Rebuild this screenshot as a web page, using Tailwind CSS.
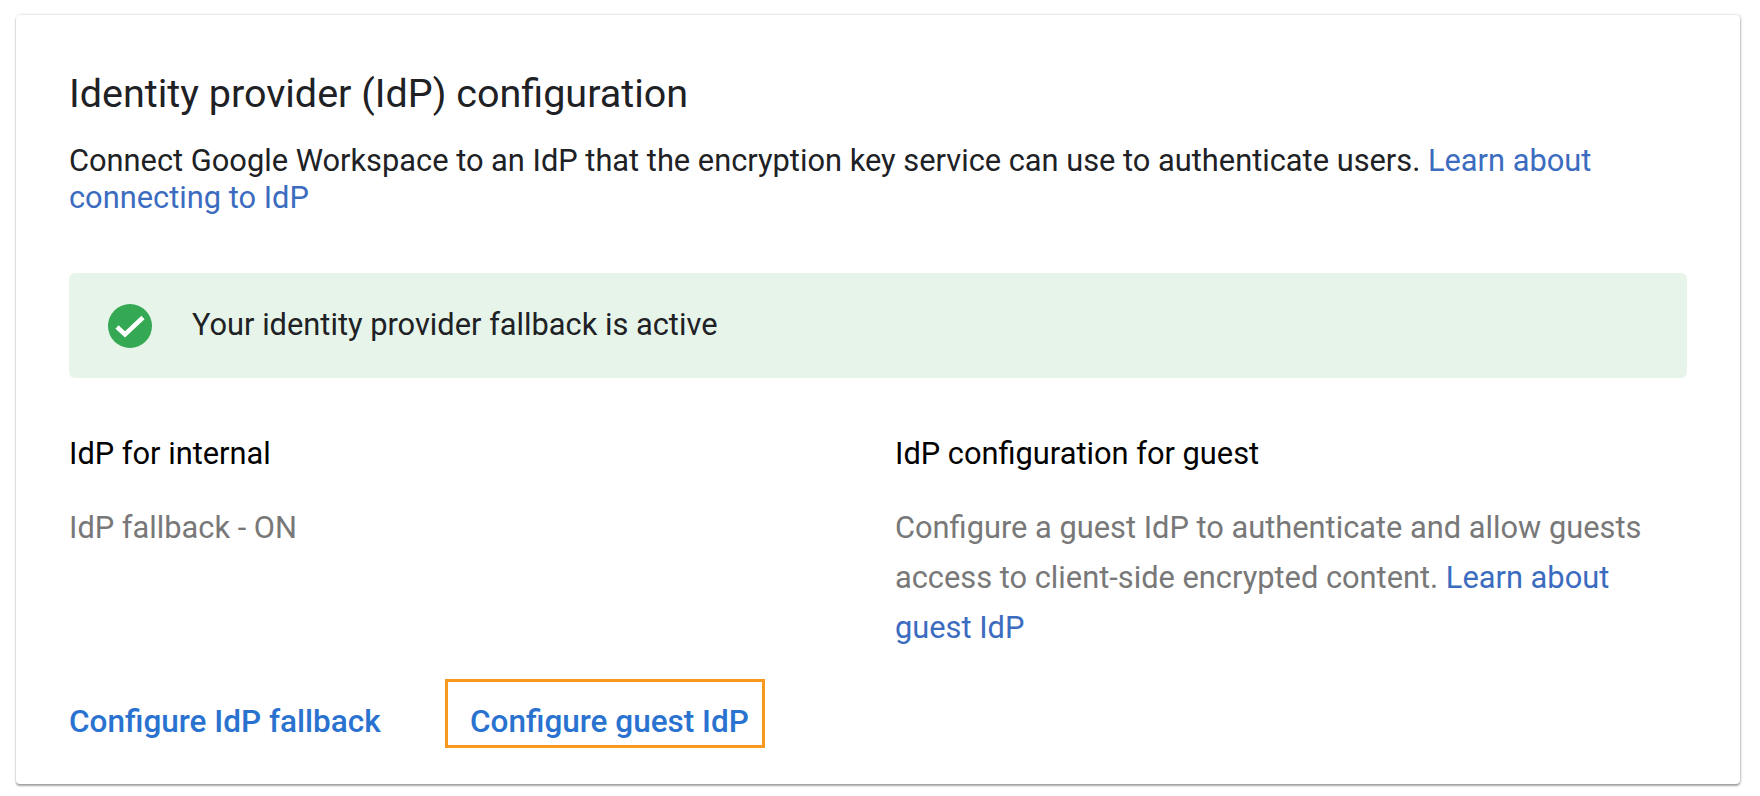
<!DOCTYPE html>
<html lang="en">
<head>
    <meta charset="UTF-8">
    <title>Identity provider (IdP) configuration</title>
    <script src="https://cdn.jsdelivr.net/npm/@tailwindcss/browser@4"></script>
</head>
<body class="bg-white font-['Roboto',sans-serif] min-h-screen pt-[15px]">
    <div class="ml-[16px] w-[1724px] h-[769px] bg-white rounded-[4px] pl-[53px] pr-[53px] pt-[57px] shadow-[0_2px_2px_rgba(0,0,0,0.32),1px_0_3px_rgba(0,0,0,0.14),0_0_3px_rgba(0,0,0,0.08)]">
        <h1 class="text-[39.5px] leading-[44px] text-[#202124]">Identity provider (IdP) configuration</h1>

        <p class="mt-[26px] text-[30.8px] leading-[37px] text-[#202124]">Connect Google Workspace to an IdP that the encryption key service can use to authenticate users. <a href="#" class="text-[#3b6cc0]">Learn about connecting to IdP</a></p>

        <div class="mt-[57px] h-[105px] bg-[#e6f4ea] rounded-[6px] flex items-center pl-[39px]">
            <svg class="w-[44px] h-[44px]" viewBox="0 0 44 44">
                <circle cx="22" cy="22" r="22" fill="#34a853"/>
                <path d="M9 23l8 7.5L35 13.5" fill="none" stroke="#fff" stroke-width="4.5"/>
            </svg>
            <span class="ml-[40px] text-[30.8px] text-[#202124]">Your identity provider fallback is active</span>
        </div>

        <div class="grid grid-cols-[826px_1fr] mt-[56px]">
            <div>
                <h2 class="text-[30.8px] leading-[40px] text-black">IdP for internal</h2>
                <p class="mt-[29px] text-[30.8px] leading-[50px] text-[#787878]">IdP fallback - ON</p>
            </div>
            <div class="pr-[20px]">
                <h2 class="text-[30.8px] leading-[40px] text-black">IdP configuration for guest</h2>
                <p class="mt-[29px] text-[30.8px] leading-[50px] text-[#787878]">Configure a guest IdP to authenticate and allow guests access to client-side encrypted content. <a href="#" class="text-[#3b6cc0]">Learn about guest IdP</a></p>
            </div>
        </div>

        <div class="flex mt-[26px]">
            <a href="#" class="w-[312px] h-[69px] pt-[16px] flex items-center text-[31.5px] font-medium text-[#2a72d0]">Configure IdP fallback</a>
            <a href="#" class="ml-[64px] h-[69px] w-[320px] border-[3px] border-[#f7981f] pl-[22px] pt-[16px] flex items-center text-[31.5px] font-medium text-[#2a72d0]">Configure guest IdP</a>
        </div>
    </div>
</body>
</html>
